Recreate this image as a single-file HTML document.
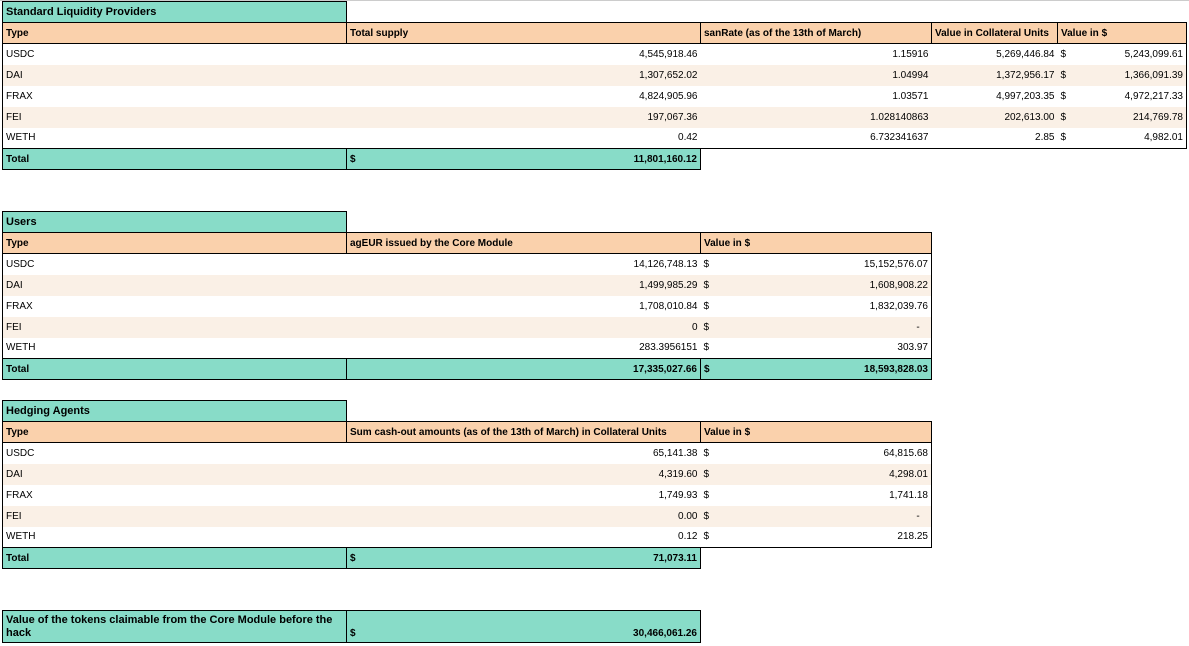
<!DOCTYPE html>
<html><head><meta charset="utf-8"><style>
body{margin:0;width:1189px;height:646px;background:#fff;position:relative;overflow:hidden;font-family:"Liberation Sans",Arial,sans-serif;font-size:10px;color:#000}
.topline{position:absolute;left:0;top:0;width:1189px;height:1px;background:#ccc}
table{position:absolute;left:2px;border-collapse:collapse;table-layout:fixed}
td{height:21px;box-sizing:border-box;padding:0 3px;white-space:nowrap;overflow:hidden;border:none;vertical-align:middle;line-height:11px}
tr{height:21px}
.t{background:#88dcc8;font-weight:bold;font-size:11px;border:1px solid #000}
.h td{background:#fad1ac;font-weight:bold;border-top:1px solid #000;border-bottom:1px solid #000;border-right:1px solid #000}
.h td:first-child{border-left:1px solid #000}
.a td{background:#faf0e6}
tr td:first-child{border-left:1px solid #000}
tr td:last-child{border-right:1px solid #000}
.tot td{background:#88dcc8;font-weight:bold;border-top:1px solid #000;border-bottom:1px solid #000;border-right:1px solid #000}
.r{text-align:right}
.d{display:flex;justify-content:space-between}
.n{border:none!important;background:transparent!important}
</style></head><body>
<div class="topline"></div>

<table style="top:1px">
<colgroup><col style="width:344px"><col style="width:354px"><col style="width:231px"><col style="width:126px"><col style="width:129px"></colgroup>
<tr><td class="t">Standard Liquidity Providers</td><td class="n"></td><td class="n"></td><td class="n"></td><td class="n"></td></tr>
<tr class="h"><td>Type</td><td>Total supply</td><td>sanRate (as of the 13th of March)</td><td>Value in Collateral Units</td><td>Value in $</td></tr>
<tr><td>USDC</td><td class="r">4,545,918.46</td><td class="r">1.15916</td><td class="r">5,269,446.84</td><td><div class="d"><span>$</span><span>5,243,099.61</span></div></td></tr>
<tr class="a"><td>DAI</td><td class="r">1,307,652.02</td><td class="r">1.04994</td><td class="r">1,372,956.17</td><td><div class="d"><span>$</span><span>1,366,091.39</span></div></td></tr>
<tr><td>FRAX</td><td class="r">4,824,905.96</td><td class="r">1.03571</td><td class="r">4,997,203.35</td><td><div class="d"><span>$</span><span>4,972,217.33</span></div></td></tr>
<tr class="a"><td>FEI</td><td class="r">197,067.36</td><td class="r">1.028140863</td><td class="r">202,613.00</td><td><div class="d"><span>$</span><span>214,769.78</span></div></td></tr>
<tr style="border-bottom:1px solid #000"><td>WETH</td><td class="r">0.42</td><td class="r">6.732341637</td><td class="r">2.85</td><td><div class="d"><span>$</span><span>4,982.01</span></div></td></tr>
<tr class="tot"><td>Total</td><td><div class="d"><span>$</span><span>11,801,160.12</span></div></td><td class="n"></td><td class="n"></td><td class="n"></td></tr>
</table>

<table style="top:211px">
<colgroup><col style="width:344px"><col style="width:354px"><col style="width:231px"></colgroup>
<tr><td class="t">Users</td><td class="n"></td><td class="n"></td></tr>
<tr class="h"><td>Type</td><td>agEUR issued by the Core Module</td><td>Value in $</td></tr>
<tr><td>USDC</td><td class="r">14,126,748.13</td><td><div class="d"><span>$</span><span>15,152,576.07</span></div></td></tr>
<tr class="a"><td>DAI</td><td class="r">1,499,985.29</td><td><div class="d"><span>$</span><span>1,608,908.22</span></div></td></tr>
<tr><td>FRAX</td><td class="r">1,708,010.84</td><td><div class="d"><span>$</span><span>1,832,039.76</span></div></td></tr>
<tr class="a"><td>FEI</td><td class="r">0</td><td><div class="d"><span>$</span><span>-&nbsp;&nbsp;&nbsp;</span></div></td></tr>
<tr><td>WETH</td><td class="r">283.3956151</td><td><div class="d"><span>$</span><span>303.97</span></div></td></tr>
<tr class="tot"><td>Total</td><td class="r">17,335,027.66</td><td><div class="d"><span>$</span><span>18,593,828.03</span></div></td></tr>
</table>

<table style="top:400px">
<colgroup><col style="width:344px"><col style="width:354px"><col style="width:231px"></colgroup>
<tr><td class="t">Hedging Agents</td><td class="n"></td><td class="n"></td></tr>
<tr class="h"><td>Type</td><td>Sum cash-out amounts (as of the 13th of March) in Collateral Units</td><td>Value in $</td></tr>
<tr><td>USDC</td><td class="r">65,141.38</td><td><div class="d"><span>$</span><span>64,815.68</span></div></td></tr>
<tr class="a"><td>DAI</td><td class="r">4,319.60</td><td><div class="d"><span>$</span><span>4,298.01</span></div></td></tr>
<tr><td>FRAX</td><td class="r">1,749.93</td><td><div class="d"><span>$</span><span>1,741.18</span></div></td></tr>
<tr class="a"><td>FEI</td><td class="r">0.00</td><td><div class="d"><span>$</span><span>-&nbsp;&nbsp;&nbsp;</span></div></td></tr>
<tr style="border-bottom:1px solid #000"><td>WETH</td><td class="r">0.12</td><td><div class="d"><span>$</span><span>218.25</span></div></td></tr>
<tr class="tot"><td>Total</td><td><div class="d"><span>$</span><span>71,073.11</span></div></td><td class="n"></td></tr>
</table>

<table style="top:610px">
<colgroup><col style="width:344px"><col style="width:354px"></colgroup>
<tr class="tot" style="height:32px"><td style="height:32px;white-space:normal;line-height:13px;font-size:11px">Value of the tokens claimable from the Core Module before the hack</td><td style="height:32px;vertical-align:bottom;padding-bottom:3px"><div class="d"><span>$</span><span>30,466,061.26</span></div></td></tr>
</table>
</body></html>
